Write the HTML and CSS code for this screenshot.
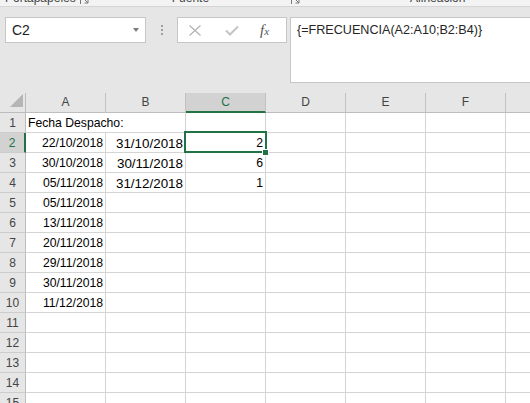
FILE: index.html
```html
<!DOCTYPE html>
<html lang="es">
<head>
<meta charset="utf-8">
<title>Excel - FRECUENCIA</title>
<link rel="stylesheet" href="styles.css">
</head>
<body>
<div class="strip">
  <span class="lbl lbl-porta">Portapapeles</span>
  <svg class="launch launch-1" width="10" height="10" viewBox="0 0 10 10"><path d="M0.5 9V0.5H9" fill="none" stroke="#7a7a7a"/><path d="M3 3L8 8M8 4.5V8H4.5" fill="none" stroke="#7a7a7a"/></svg>
  <span class="lbl lbl-fuente">Fuente</span>
  <svg class="launch launch-2" width="10" height="10" viewBox="0 0 10 10"><path d="M0.5 9V0.5H9" fill="none" stroke="#7a7a7a"/><path d="M3 3L8 8M8 4.5V8H4.5" fill="none" stroke="#7a7a7a"/></svg>
  <span class="lbl lbl-alin">Alineación</span>
</div>

<div class="fbar">
  <div class="namebox"><span>C2</span><span class="caret"></span></div>
  <div class="dots"><i></i><i></i><i></i></div>
  <div class="btns">
    <svg class="ico-x" width="14" height="11" viewBox="0 0 14 11"><path d="M1.5 0.5L12.5 10.5M12.5 0.5L1.5 10.5" stroke="#b4b4b4" stroke-width="1.3" fill="none"/></svg>
    <svg class="ico-ok" width="14" height="11" viewBox="0 0 14 11"><path d="M1 5.5L5 9.5L13 1.5" stroke="#c4c4c4" stroke-width="2" fill="none"/></svg>
    <span class="fx"><span class="fx-f">f</span><span class="fx-x">x</span></span>
  </div>
  <div class="formula">{=FRECUENCIA(A2:A10;B2:B4)}</div>
</div>

<div class="sheet">
  <div class="h corner"><svg width="26" height="19" viewBox="0 0 26 19"><path d="M23 1V14H10Z" fill="#b5b5b5"/></svg></div>
  <div class="h">A</div><div class="h">B</div><div class="h act">C</div><div class="h">D</div><div class="h">E</div><div class="h">F</div><div class="h g"></div>

  <div class="rh">1</div><div class="c span2">Fecha Despacho:</div><div class="c"></div><div class="c"></div><div class="c"></div><div class="c"></div><div class="c g"></div>

  <div class="rh act">2</div><div class="c r">22/10/2018</div><div class="c r big">31/10/2018</div><div class="c r">2</div><div class="c"></div><div class="c"></div><div class="c"></div><div class="c g"></div>

  <div class="rh">3</div><div class="c r">30/10/2018</div><div class="c r big">30/11/2018</div><div class="c r">6</div><div class="c"></div><div class="c"></div><div class="c"></div><div class="c g"></div>

  <div class="rh">4</div><div class="c r">05/11/2018</div><div class="c r big">31/12/2018</div><div class="c r">1</div><div class="c"></div><div class="c"></div><div class="c"></div><div class="c g"></div>

  <div class="rh">5</div><div class="c r">05/11/2018</div><div class="c"></div><div class="c"></div><div class="c"></div><div class="c"></div><div class="c"></div><div class="c g"></div>

  <div class="rh">6</div><div class="c r">13/11/2018</div><div class="c"></div><div class="c"></div><div class="c"></div><div class="c"></div><div class="c"></div><div class="c g"></div>

  <div class="rh">7</div><div class="c r">20/11/2018</div><div class="c"></div><div class="c"></div><div class="c"></div><div class="c"></div><div class="c"></div><div class="c g"></div>

  <div class="rh">8</div><div class="c r">29/11/2018</div><div class="c"></div><div class="c"></div><div class="c"></div><div class="c"></div><div class="c"></div><div class="c g"></div>

  <div class="rh">9</div><div class="c r">30/11/2018</div><div class="c"></div><div class="c"></div><div class="c"></div><div class="c"></div><div class="c"></div><div class="c g"></div>

  <div class="rh">10</div><div class="c r">11/12/2018</div><div class="c"></div><div class="c"></div><div class="c"></div><div class="c"></div><div class="c"></div><div class="c g"></div>

  <div class="rh">11</div><div class="c"></div><div class="c"></div><div class="c"></div><div class="c"></div><div class="c"></div><div class="c"></div><div class="c g"></div>

  <div class="rh">12</div><div class="c"></div><div class="c"></div><div class="c"></div><div class="c"></div><div class="c"></div><div class="c"></div><div class="c g"></div>

  <div class="rh">13</div><div class="c"></div><div class="c"></div><div class="c"></div><div class="c"></div><div class="c"></div><div class="c"></div><div class="c g"></div>

  <div class="rh">14</div><div class="c"></div><div class="c"></div><div class="c"></div><div class="c"></div><div class="c"></div><div class="c"></div><div class="c g"></div>

  <div class="rh">15</div><div class="c"></div><div class="c"></div><div class="c"></div><div class="c"></div><div class="c"></div><div class="c"></div><div class="c g"></div>

  <div class="sel"></div>
  <div class="handle"></div>
</div>
</body>
</html>
```

FILE: styles.css
```css
html, body {
  margin: 0;
  padding: 0;
}
body {
  width: 530px;
  height: 403px;
  overflow: hidden;
  background: #e6e6e6;
  font-family: "Liberation Sans", Arial, sans-serif;
}

/* ribbon group labels, mostly cut off */
.strip {
  height: 6px;
  border-bottom: 1px solid #d5d5d5;
  background: #f3f3f3;
  overflow: hidden;
  display: flex;
  align-items: flex-start;
  font-size: 12px;
  color: #444;
}
.lbl {
  margin-top: -9px;
  line-height: 14px;
  white-space: nowrap;
}
.lbl-porta { margin-left: 5px; }
.lbl-fuente { margin-left: 82px; }
.lbl-alin { margin-left: 109px; }
.launch {
  margin-top: -5px;
  flex: none;
}
.launch-1 { margin-left: 4px; }
.launch-2 { margin-left: 82px; }

/* formula bar */
.fbar {
  display: flex;
  align-items: flex-start;
  height: 86px;
  box-sizing: border-box;
  padding: 10px 0 0 5px;
}
.namebox {
  flex: none;
  width: 141px;
  height: 26px;
  box-sizing: border-box;
  border: 1px solid #c6c6c6;
  background: #fff;
  display: flex;
  align-items: center;
  justify-content: space-between;
  padding: 0 6px 0 6px;
  font-size: 14px;
  color: #222;
}
.caret {
  width: 0;
  height: 0;
  border-left: 3px solid transparent;
  border-right: 3px solid transparent;
  border-top: 4px solid #7a7a7a;
}
.dots {
  flex: none;
  width: 31px;
  height: 26px;
  display: flex;
  flex-direction: column;
  align-items: center;
  justify-content: center;
  gap: 2px;
}
.dots i {
  display: block;
  width: 2px;
  height: 2px;
  background: #a0a0a0;
}
.btns {
  flex: none;
  width: 110px;
  height: 26px;
  box-sizing: border-box;
  border: 1px solid #c6c6c6;
  background: #fff;
  display: flex;
  align-items: center;
}
.ico-x { margin-left: 10px; flex: none; }
.ico-ok { margin-left: 23px; flex: none; }
.fx {
  margin-left: 21px;
  font-family: "Liberation Serif", "Times New Roman", serif;
  font-style: italic;
  color: #555;
  line-height: 14px;
  white-space: nowrap;
}
.fx-f { font-size: 15px; }
.fx-x { font-size: 11px; }
.formula {
  flex: 1;
  margin-left: 3px;
  margin-right: -2px;
  height: 66px;
  box-sizing: border-box;
  border: 1px solid #c6c6c6;
  background: #fff;
  padding: 4px 0 0 6px;
  font-size: 12.6px;
  line-height: 16px;
  color: #262626;
  white-space: nowrap;
  overflow: hidden;
}

/* sheet grid */
.sheet {
  position: relative;
  display: grid;
  grid-template-columns: 26px repeat(6, 80px) 24px;
  grid-auto-rows: 20px;
  width: 530px;
  background: #fff;
}
.h {
  background: #e6e6e6;
  border-right: 1px solid #c2c2c2;
  border-bottom: 1px solid #bdbdbd;
  box-sizing: border-box;
  text-align: center;
  font-size: 12px;
  line-height: 19px;
  color: #444;
}
.h.corner {
  border-right-color: #bdbdbd;
}
.h.corner svg { display: block; }
.h.act {
  background: #d2d2d2;
  color: #217346;
  border-bottom: 2px solid #217346;
}
.rh {
  background: #e6e6e6;
  border-right: 1px solid #bdbdbd;
  border-bottom: 1px solid #cdcdcd;
  box-sizing: border-box;
  text-align: center;
  font-size: 12px;
  padding-top: 2px;
  line-height: 17px;
  color: #444;
}
.rh.act {
  background: #d2d2d2;
  color: #217346;
  border-right: 2px solid #217346;
}
.c {
  border-right: 1px solid #d4d4d4;
  border-bottom: 1px solid #d4d4d4;
  box-sizing: border-box;
  padding: 2px 2px 0 2px;
  font-size: 12.2px;
  line-height: 17px;
  color: #000;
  white-space: nowrap;
  overflow: hidden;
}
.c.r { text-align: right; }
.c.big { font-size: 13.4px; }
.c.span2 { grid-column: span 2; }
.g { border-right: 0; }

.sel {
  position: absolute;
  left: 184px;
  top: 38px;
  width: 83px;
  height: 22px;
  box-sizing: border-box;
  border: 2px solid #217346;
}
.handle {
  position: absolute;
  left: 262px;
  top: 56px;
  width: 5px;
  height: 5px;
  background: #217346;
  border: 1px solid #fff;
}
```
